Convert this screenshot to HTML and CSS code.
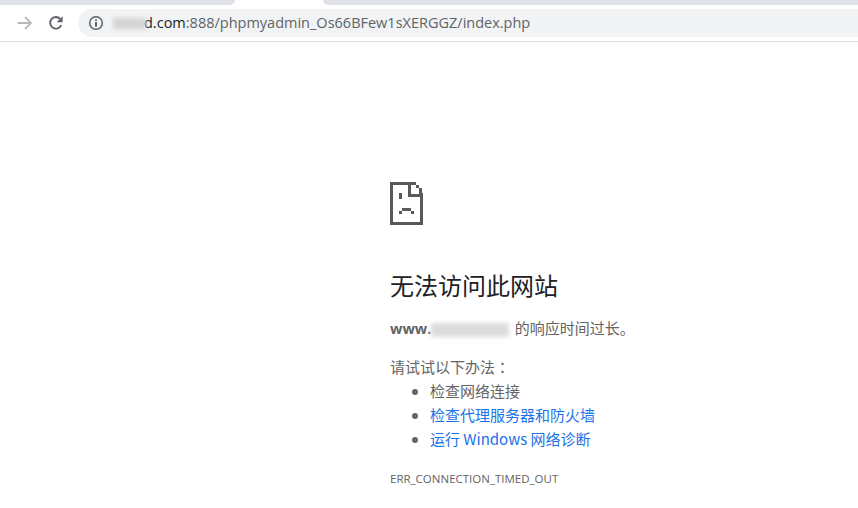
FILE: index.html
```html
<!DOCTYPE html>
<html lang="zh-CN">
<head>
<meta charset="utf-8">
<title>无法访问此网站</title>
<link rel="stylesheet" href="styles.css">
</head>
<body>
<header class="chrome">
  <div class="tabstrip">
    <div class="tab-bg tab-left"></div>
    <div class="tab-active"></div>
    <div class="tab-bg tab-right"></div>
  </div>
  <div class="toolbar">
    <svg class="nav-icon forward" width="16" height="16" viewBox="0 0 16 16"><path d="M0.5 8H14M8 2l6 6-6 6" fill="none" stroke="#b9bbbe" stroke-width="1.8"/></svg>
    <svg class="nav-icon reload" width="16" height="16" viewBox="0 0 16 16"><path d="M13.2 10.2A5.8 5.8 0 1 1 12.2 3.9" fill="none" stroke="#5f6368" stroke-width="1.9"/><path d="M14.6 1.2V7.2H8.6z" fill="#5f6368"/></svg>
    <div class="omnibox">
      <svg class="info" width="16" height="16" viewBox="0 0 16 16"><circle cx="8" cy="8" r="6.3" fill="none" stroke="#5f6368" stroke-width="1.5"/><path d="M7.2 4.2h1.6v1.6H7.2zM7.2 7h1.6v4.8H7.2z" fill="#3c4043"/></svg>
      <span class="url"><span class="host-mask"><span class="blur-blob"></span></span><span class="host">d.com</span><span class="path">:888/phpmyadmin_Os66BFew1sXERGGZ/index.php</span></span>
    </div>
  </div>
</header>
<main class="content">
  <svg class="sad" width="33" height="43" viewBox="0 0 33 43" shape-rendering="crispEdges" fill="#58595b">
    <rect x="0" y="0" width="26" height="3"/>
    <rect x="0" y="0" width="3" height="43"/>
    <rect x="0" y="40" width="33" height="3"/>
    <rect x="30" y="11" width="3" height="32"/>
    <rect x="18" y="3" width="3" height="12"/>
    <rect x="18" y="12" width="15" height="3"/>
    <rect x="26" y="3" width="3" height="3"/>
    <rect x="29" y="6" width="3" height="6"/>
    <rect x="9" y="11" width="3" height="6"/>
    <rect x="12" y="26" width="9" height="3"/>
    <rect x="9" y="29" width="3" height="3"/>
    <rect x="21" y="29" width="3" height="3"/>
  </svg>
  <h1 class="title">无法访问此网站</h1>
  <p class="summary"><strong class="domain">www.<span class="domain-mask"><span class="blur-blob wide"></span></span></strong> 的响应时间过长。</p>
  <p class="try">请试试以下办法<span class="colon" lang="zh-TW">：</span></p>
  <ul class="tips">
    <li>检查网络连接</li>
    <li><a href="#">检查代理服务器和防火墙</a></li>
    <li><a href="#">运行 Windows 网络诊断</a></li>
  </ul>
  <div class="code">ERR_CONNECTION_TIMED_OUT</div>
</main>
</body>
</html>
```
FILE: styles.css
```css
* { box-sizing: border-box; }
html, body { margin: 0; padding: 0; background: #fff; }
body { width: 858px; height: 508px; overflow: hidden; font-family: "Noto Sans CJK SC", "Noto Sans", sans-serif; color: #646464; }

.chrome { height: 42px; border-bottom: 1px solid #dcdcdc; }
.tabstrip { display: flex; height: 5px; }
.tab-bg { background: #dee1e6; }
.tab-left { width: 235px; border-bottom-right-radius: 5px; }
.tab-active { width: 88px; background: #fff; }
.tab-right { flex: 1; border-bottom-left-radius: 5px; }

.toolbar { display: flex; align-items: flex-start; padding-top: 4px; height: 36px; }
.nav-icon { flex: none; margin-top: 6px; }
.forward { margin-left: 17px; }
.reload { margin-left: 15px; }
.omnibox { flex: 1; height: 28px; margin-left: 14px; background: #f1f3f4; border-radius: 14px 0 0 14px; display: flex; align-items: center; padding-left: 10px; }
.info { flex: none; }
.url { margin-left: 5px; font-family: "Open Sans", sans-serif; font-size: 14.5px; line-height: 28px; white-space: nowrap; display: flex; }
.host-mask { width: 35px; position: relative; }
.blur-blob { position: absolute; left: 4px; right: -2px; top: 9px; height: 11px; background: #d4d4d4; filter: blur(2px); }
.host { color: #202124; }
.path { color: #5f6368; }

.content { padding: 140px 0 0 390px; }
.sad { display: block; }
.title { margin: 44px 0 0; font-size: 24px; line-height: 32px; font-weight: 400; color: #202124; }
.summary { margin: 15px 0 0; font-size: 15px; line-height: 24px; white-space: nowrap; }
.domain { font-family: "Open Sans", sans-serif; font-size: 14.5px; font-weight: 700; color: #646464; }
.domain-mask { display: inline-block; width: 80px; height: 14px; position: relative; vertical-align: -2px; }
.blur-blob.wide { left: 0; right: 2px; top: 1px; height: 14px; background: #dcdcdc; }
.try { margin: 14px 0 0; font-size: 15px; line-height: 24px; }
.colon { font-family: "Noto Sans CJK TC", sans-serif; }
.tips { margin: 0; padding: 0 0 0 40px; font-size: 15px; line-height: 24px; }
.tips a { color: #1a73e8; text-decoration: none; }
.code { margin-top: 16px; font-family: "Open Sans", sans-serif; font-size: 11.5px; line-height: 24px; color: #646464; }
```
